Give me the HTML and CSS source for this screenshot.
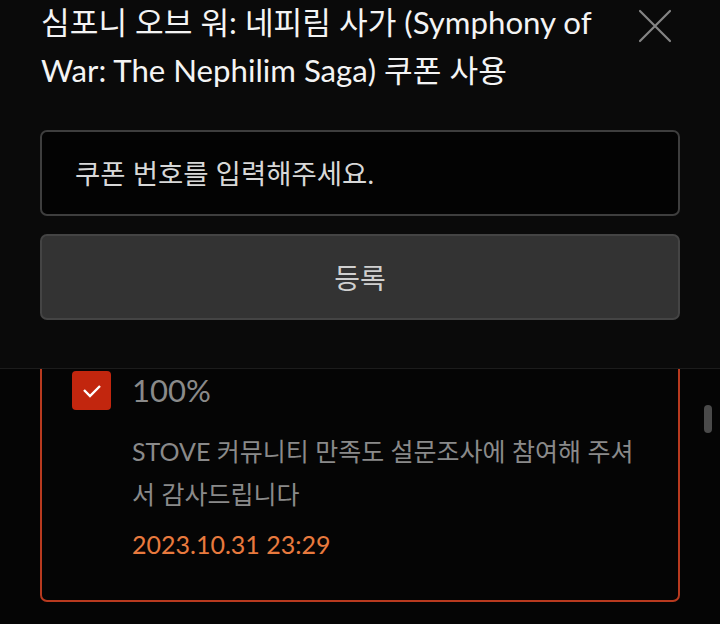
FILE: index.html
```html
<html lang="ko">
  <head>
    <meta charset="UTF-8" />
    <meta name="viewport" content="width=device-width, initial-scale=1.0" />
    <title>쿠폰 사용</title>
    <link rel="stylesheet" href="styles.css">
  </head>
  <body>
    <div class="sheet">
      <div class="header">
        <div class="title-row">
          <h1 class="title">심포니 오브 워: 네피림 사가 (Symphony of War: The Nephilim Saga) 쿠폰 사용</h1>
          <button class="close" aria-label="닫기">
            <svg width="34" height="34" viewBox="0 0 34 34">
              <path d="M2 2 L32 32 M32 2 L2 32" stroke="#858585" stroke-width="2.2" stroke-linecap="round" fill="none" />
            </svg>
          </button>
        </div>
        <div class="coupon-form">
          <input class="coupon-input" type="text" placeholder="쿠폰 번호를 입력해주세요." />
          <button class="submit">등록</button>
        </div>
      </div>
      <div class="list">
        <div class="card">
          <div class="card-head">
            <span class="check">
              <svg width="20" height="14" viewBox="0 0 20 14">
                <path d="M2 6 L8 12 L18 2" stroke="#fff" stroke-width="2.4" fill="none" />
              </svg>
            </span>
            <span class="rate">100%</span>
          </div>
          <p class="desc">STOVE 커뮤니티 만족도 설문조사에 참여해 주셔서 감사드립니다</p>
          <p class="date">2023.10.31 23:29</p>
        </div>
        <div class="scroll-thumb"></div>
      </div>
    </div>
  </body>
</html>
```

FILE: styles.css
```css
body {
  margin: 0;
  background-color: #050505;
  font-family: "Lato", "Noto Sans CJK KR", sans-serif;
  overflow: hidden;
}

.sheet {
  width: 720px;
  height: 624px;
  display: flex;
  flex-direction: column;
}

.header {
  background-color: #0a0a0a;
  padding: 0 40px 48px 40px;
  border-bottom: 1px solid #1c1c1c;
}

.title-row {
  display: flex;
  justify-content: space-between;
  align-items: flex-start;
}

.title {
  margin: -2px 0 0 0;
  padding-left: 1px;
  width: 580px;
  font-size: 31.2px;
  font-weight: 400;
  line-height: 48px;
  color: #f4f4f4;
}

.close {
  background: none;
  border: none;
  padding: 0;
  margin: 9px 8px 0 0;
  width: 34px;
  height: 34px;
}

.coupon-form {
  margin-top: 36px;
  display: flex;
  flex-direction: column;
  gap: 18px;
}

.coupon-input {
  box-sizing: border-box;
  height: 86px;
  padding: 0 33px;
  background-color: #030303;
  border: 2px solid #3e3e3e;
  border-radius: 7px;
  font-family: inherit;
  font-size: 27.5px;
  color: #ddd;
  outline: none;
}

.coupon-input::placeholder {
  color: #d8d8d8;
}

.submit {
  height: 86px;
  background-color: #333;
  border: 2px solid #444;
  border-radius: 7px;
  font-family: inherit;
  font-size: 28px;
  color: #d0d0d0;
}

.list {
  position: relative;
  flex: 1;
  overflow: hidden;
  padding: 0 40px;
}

.card {
  margin-top: -40px;
  border: 2px solid #b83a1f;
  border-radius: 7px;
  padding: 40px 30px 0 30px;
  box-sizing: border-box;
  height: 273px;
}

.card-head {
  display: flex;
  align-items: center;
  gap: 21px;
}

.check {
  width: 39px;
  height: 39px;
  border-radius: 4px;
  background-color: #c2260e;
  display: flex;
  align-items: center;
  justify-content: center;
}

.rate {
  font-size: 31px;
  line-height: 39px;
  color: #8a8a8a;
}

.desc {
  margin: 20px 0 0 60px;
  font-size: 25px;
  line-height: 43px;
  color: #8a8a8a;
}

.date {
  margin: 7px 0 0 60px;
  font-size: 25px;
  line-height: 43px;
  color: #e87a3e;
}

.scroll-thumb {
  position: absolute;
  top: 36px;
  right: 8px;
  width: 8px;
  height: 28px;
  border-radius: 4px;
  background-color: #4a4a4a;
}
```
